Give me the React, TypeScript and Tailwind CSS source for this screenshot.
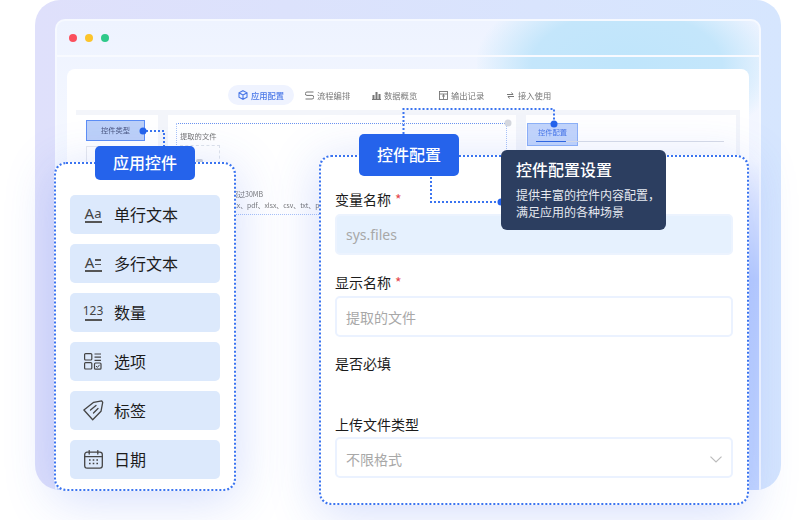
import { ReactNode } from "react";

const cjk = "font-['Noto_Sans_CJK_SC','Noto_Sans',sans-serif]";

function Underlined({ children }: { children: ReactNode }) {
  return (
    <div className="flex flex-col items-center">
      <div className="flex h-[14px] items-center font-['Noto_Sans',sans-serif] text-[#444]">{children}</div>
      <div className="mt-[1px] h-[1.5px] w-[17px] bg-[#555]" />
    </div>
  );
}

function OptionIcon() {
  return (
    <svg width="18" height="17" viewBox="0 0 18 17" fill="none" stroke="#444" strokeWidth="1.2">
      <rect x="0.6" y="0.6" width="7.2" height="6.4" rx="1" />
      <rect x="0.6" y="9.6" width="7.2" height="6.4" rx="1" />
      <path d="M10.5 1h6.5M10.5 4.2h6.5M10.5 7.4h6.5" />
      <rect x="10.5" y="10" width="6.5" height="6.2" rx="1" />
      <path d="M12 13l1.4 1.4 2.2-2.6" strokeWidth="1" />
    </svg>
  );
}

function TagIcon() {
  return (
    <svg width="21" height="21" viewBox="0 0 21 21" fill="none" stroke="#444" strokeWidth="1.3" strokeLinejoin="round" strokeLinecap="round">
      <path d="M0.9 10 10.7 2.3 18.7 0.8 19.7 2.3 18 11.3 9.7 19.7Z" />
      <path d="M7.5 10 13 5.5M10.5 13 15 8.5" />
    </svg>
  );
}

function CalendarIcon() {
  return (
    <svg width="19" height="19" viewBox="0 0 19 19" fill="none" stroke="#444" strokeWidth="1.3" strokeLinecap="round">
      <rect x="0.7" y="2.2" width="17.6" height="16" rx="2.4" />
      <path d="M0.7 6.6h17.6M5.2 0.6v3.4M13.8 0.6v3.4" />
      <path d="M5 10h1.6M8.7 10h1.6M12.4 10h1.6M5 13.4h1.6M8.7 13.4h1.6M12.4 13.4h1.6" strokeWidth="1.5" strokeLinecap="butt" />
    </svg>
  );
}

const controls = [
  {
    name: "单行文本",
    icon: (
      <Underlined>
        <span className="text-[15px] leading-none">A</span>
        <span className="text-[13px] leading-none">a</span>
      </Underlined>
    ),
  },
  {
    name: "多行文本",
    icon: (
      <Underlined>
        <span className="text-[15px] leading-none">A</span>
        <span className="ml-[1px] flex flex-col gap-[3px]">
          <span className="block h-[1.5px] w-[6px] bg-[#555]" />
          <span className="block h-[1.5px] w-[6px] bg-[#555]" />
        </span>
      </Underlined>
    ),
  },
  {
    name: "数量",
    icon: (
      <Underlined>
        <span className="text-[12px] leading-none">123</span>
      </Underlined>
    ),
  },
  { name: "选项", icon: <OptionIcon /> },
  { name: "标签", icon: <TagIcon /> },
  { name: "日期", icon: <CalendarIcon /> },
];

const tabs = [
  {
    name: "应用配置",
    active: true,
    w: "w-[66px]",
    icon: (
      <svg width="10" height="10" viewBox="0 0 10 10" fill="none" stroke="#4a78e8" strokeWidth="1.1">
        <path d="M5 .7 9 2.8v4.4L5 9.3 1 7.2V2.8ZM1 2.8 5 5l4-2.2M5 5v4.3" />
      </svg>
    ),
  },
  {
    name: "流程编排",
    w: "w-[56px] ml-[11px]",
    icon: (
      <svg width="9" height="9" viewBox="0 0 9 9" fill="none" stroke="#777" strokeWidth="1">
        <path d="M8.5 1H2a1.5 1.5 0 0 0 0 3.4h5a1.6 1.6 0 0 1 0 3.6H.5" />
      </svg>
    ),
  },
  {
    name: "数据概览",
    w: "w-[56px] ml-[11px]",
    icon: (
      <svg width="9" height="9" viewBox="0 0 9 9" fill="#777">
        <rect x="0.5" y="4" width="2" height="4" />
        <rect x="3.5" y="1" width="2" height="7" />
        <rect x="6.5" y="3" width="2" height="5" />
        <rect x="0" y="8" width="9" height="1" />
      </svg>
    ),
  },
  {
    name: "输出记录",
    w: "w-[56px] ml-[11px]",
    icon: (
      <svg width="9" height="9" viewBox="0 0 9 9" fill="none" stroke="#777" strokeWidth="0.9">
        <rect x="0.5" y="0.5" width="8" height="8" />
        <path d="M0.5 3h8M3 5h3M4.5 3v5" />
      </svg>
    ),
  },
  {
    name: "接入使用",
    w: "w-[56px] ml-[11px]",
    icon: (
      <svg width="9" height="9" viewBox="0 0 9 9" fill="none" stroke="#777" strokeWidth="1">
        <path d="M1 3.5h6L5.5 1.500M8 5.500H2L3.500 7.500" />
      </svg>
    ),
  },
];

function Field({ label, required, className, children }: { label: string; required?: boolean; className?: string; children?: ReactNode }) {
  return (
    <div className={className}>
      <div className="text-[14px] leading-[20px] text-[#1c1c1c]">
        {label}
        {required && <span className="ml-[4px] text-[#e5484d]">*</span>}
      </div>
      {children}
    </div>
  );
}

function App() {
  return (
    <div className={`relative h-[520px] w-[805px] overflow-hidden bg-white ${cjk}`}>
      <div className="absolute left-[35px] top-0 h-[490px] w-[746px] overflow-hidden rounded-[25px] bg-gradient-to-r from-[#dfe0fb] to-[#d6e6fe] px-[20px] pt-[19px]">
        <div className="relative flex h-full flex-col overflow-hidden rounded-t-[10px] border-x-2 border-t-2 border-[#f6f9ff] bg-[linear-gradient(180deg,#eef3ff_0%,#f5f8ff_30%,#bdd0ff_55%,#c6d8ff_100%)]">
          <div className="absolute -top-[40px] left-[420px] h-[170px] w-[300px] bg-[radial-gradient(ellipse_at_center,#bfe5fb_0%,#c4e6fb_45%,rgba(200,230,252,0)_72%)]" />
          <div className="relative flex h-[36px] shrink-0 items-center gap-[8px] border-b-2 border-[#f8faff] pl-[12px]">
            <span className="h-[8px] w-[8px] rounded-full bg-[#fb4f5d]" />
            <span className="h-[8px] w-[8px] rounded-full bg-[#fcc42b]" />
            <span className="h-[8px] w-[8px] rounded-full bg-[#2fc98a]" />
          </div>

          <div className="relative mx-[10px] mt-[12px] flex-1 rounded-t-[8px] bg-white pt-[16px] blur-[0.4px]">
            <div className="flex pl-[161px]">
              {tabs.map((tab) => (
                <div
                  key={tab.name}
                  className={`flex h-[20px] items-center gap-[3px] text-[8.3px] ${tab.w} ${
                    tab.active ? "justify-center rounded-full bg-[#eff3ff] font-medium text-[#4a78e8]" : "text-[#777]"
                  }`}
                >
                  {tab.icon}
                  {tab.name}
                </div>
              ))}
            </div>

            <div className="mx-[9px] mt-[5px] flex h-[200px] gap-[10px] bg-[#f3f5fa] pr-[4px] pt-[5px]">
              <div className="w-[82px] bg-white pl-[10px] pt-[5px]">
                <div className="flex h-[21px] w-[59px] items-center justify-center border-[1.5px] border-[#5d8ef5] bg-[#bcd0f8] text-[7.3px] text-[#4a5580]">
                  控件类型
                </div>
                <div className="mt-[5px] h-[30px] w-[58px] border border-[#e6e8ee]" />
              </div>

              <div className="flex-1 bg-white pl-[8px] pt-[8px]">
                <div className="mr-[9px] h-[92px] border border-dotted border-x-[#a9c3f8] border-t-[#6b93f0] border-b-[#a9c3f8] pl-[3px] pt-[7px] text-[7.3px] text-[#777]">
                  提取的文件
                  <div className="mt-[3px] flex h-[35px] w-[40px] items-center justify-end border border-dashed border-[#dfe3ea] pr-[16px]">
                    <span className="h-[7px] w-[7px] rounded-[2px] bg-[#cdd1d8]" />
                  </div>
                  <div className="ml-[16px] mt-[9px] whitespace-nowrap text-[7px]">文件大小不超过30MB</div>
                  <div className="ml-[45px] mt-[1px] whitespace-nowrap text-[6.8px]">docx、pdf、xlsx、csv、txt、ppt</div>
                </div>
              </div>

              <div className="w-[210px] bg-white pl-[1px] pt-[8px]">
                <div className="flex h-[23px] w-[51px] justify-center border border-[#8db0f7] bg-[#c3d5fb] pt-[3px] text-[7.3px] text-[#4a78e8]">
                  控件配置
                </div>
                <div className="relative -mt-[5px] ml-[9px] h-[1px] w-[188px] bg-[#d8dce6]">
                  <div className="h-[1px] w-[30px] bg-[#2f66e0]" />
                </div>
              </div>
            </div>
          </div>
        </div>
      </div>

      {/* connectors between the preview and the cards */}
      <svg className="absolute left-0 top-0" width="805" height="520" fill="none" stroke="#3b74f0" strokeWidth="2" strokeDasharray="2 2">
        <path d="M146 131H164V181" />
        <path d="M403.500 134V109H554V122" />
        <circle cx="143" cy="131" r="3.500" fill="#2563eb" stroke="none" />
        <circle cx="554" cy="124" r="3.500" fill="#2563eb" stroke="none" />
        <circle cx="508" cy="123" r="3.500" fill="#d6d8de" stroke="none" />
      </svg>

      <div className="absolute left-[54px] top-[162px] flex h-[329px] w-[182px] flex-col gap-[10px] rounded-[12px] border-2 border-dotted border-[#3b74f0] bg-white pl-[14px] pr-[14px] pt-[31px] shadow-[0_8px_50px_rgba(60,100,240,0.22)]">
        {controls.map((item) => (
          <div key={item.name} className="flex h-[39px] items-center rounded-[5px] bg-[#dce9fc] pl-[12px]">
            <div className="flex w-[22px] justify-center">{item.icon}</div>
            <span className="-mt-[1px] ml-[10px] text-[16px] text-[#1c1c1c]">{item.name}</span>
          </div>
        ))}
      </div>
      <div className="absolute left-[95px] top-[146px] flex h-[34px] w-[100px] items-center justify-center rounded-[5px] bg-[#2563eb] pb-[2px] text-[16px] font-medium text-white">
        应用控件
      </div>

      <div className="absolute left-[319px] top-[155px] h-[350px] w-[430px] rounded-[12px] border-2 border-dotted border-[#3b74f0] bg-white px-[14px] pt-[32px] shadow-[0_8px_50px_rgba(60,100,240,0.22)]">
        <Field label="变量名称" required>
          <div className="mt-[5px] flex h-[41px] items-center rounded-[5px] border-2 border-[#ecf3fe] bg-[#e6f1fe] pl-[9px] font-['Noto_Sans',sans-serif] text-[14px] text-[#a8a8a8]">
            sys.files
          </div>
        </Field>
        <Field label="显示名称" required className="mt-[17px]">
          <div className="mt-[4px] flex h-[41px] items-center rounded-[5px] border-2 border-[#ebf2ff] pl-[9px] pt-[2px] text-[14px] text-[#a8a8a8]">
            提取的文件
          </div>
        </Field>
        <Field label="是否必填" className="mt-[16px]" />
        <Field label="上传文件类型" className="mt-[41px]">
          <div className="mt-[3px] flex h-[41px] items-center justify-between rounded-[5px] border-2 border-[#ebf2ff] pl-[9px] pr-[9px] pt-[3px] text-[14px] text-[#a8a8a8]">
            不限格式
            <svg width="12" height="7" viewBox="0 0 12 7" fill="none" stroke="#bcbcbc" strokeWidth="1.2">
              <path d="M.5.6 6 6l5.500-5.400" />
            </svg>
          </div>
        </Field>
      </div>

      <div className="absolute left-[359px] top-[134px] flex h-[42px] w-[100px] items-center justify-center rounded-[5px] bg-[#2563eb] pb-[2px] text-[16px] font-medium text-white">
        控件配置
      </div>

      <svg className="absolute left-0 top-0" width="805" height="520" fill="none" stroke="#3b74f0" strokeWidth="2" strokeDasharray="2 2">
        <path d="M431 177V202H498" />
        <circle cx="501" cy="202" r="3.500" fill="#2563eb" stroke="none" />
      </svg>

      <div className="absolute left-[501px] top-[150px] h-[80px] w-[165px] rounded-[6px] bg-[#2c3e60] pl-[15px] pt-[8px] text-white">
        <div className="text-[16px] font-medium leading-[22px]">控件配置设置</div>
        <div className="mt-[6px] text-[12px] leading-[17px] text-[#e6e9f0]">
          提供丰富的控件内容配置，
          <br />
          满足应用的各种场景
        </div>
      </div>
    </div>
  );
}

export default App;
